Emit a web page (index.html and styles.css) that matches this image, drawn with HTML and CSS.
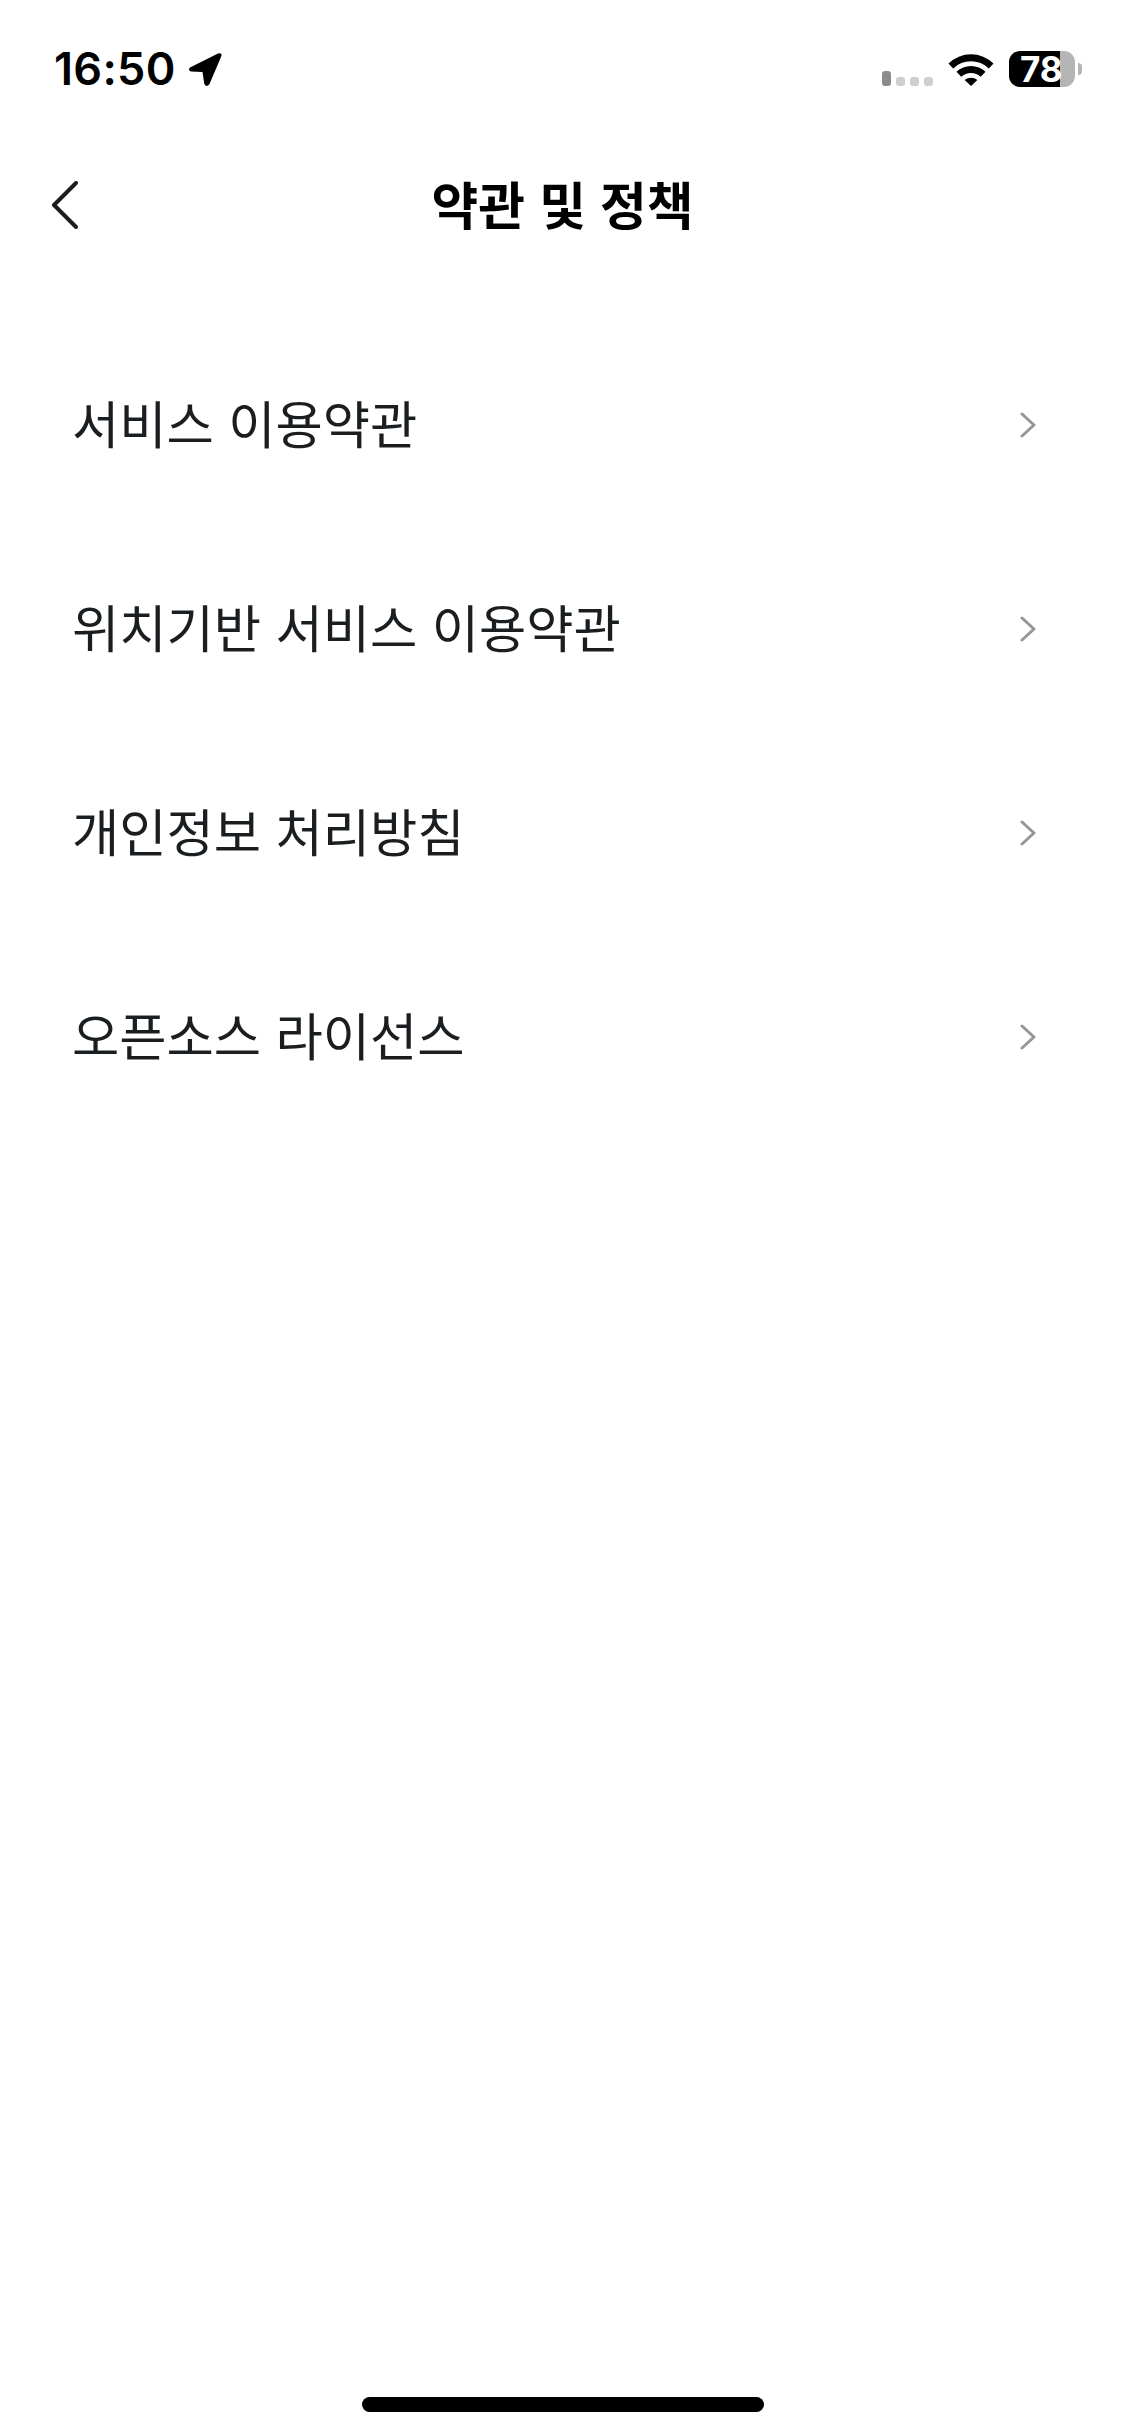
FILE: index.html
```html
<!DOCTYPE html>
<html lang="ko">
<head>
  <meta charset="UTF-8" />
  <meta name="viewport" content="width=device-width, initial-scale=1.0"/>
  <title>약관 및 정책</title>
  <link rel="stylesheet" href="styles.css">
</head>
<body>

  <div class="screen">
    <div class="status-bar">
      <div class="status-left">
        <span class="time">16:50</span>
        <svg class="location" width="36" height="37" viewBox="0 0 36 37">
          <path d="M3 16.5 L31 2.5 Q35.5 1 34.2 5.5 L22.5 33 Q19.5 37 17.3 33 L15.5 21 L4 20.5 Q0.5 19 3 16.5 Z" fill="#000"/>
        </svg>
      </div>
      <div class="status-right">
        <div class="signal">
          <span class="bar-on"></span>
          <span class="bar-off"></span>
          <span class="bar-off"></span>
          <span class="bar-off"></span>
        </div>
        <svg class="wifi" width="46" height="34" viewBox="0 0 46 34">
          <path d="M0.5 11.5 A32 32 0 0 1 45.5 11.5 L40.8 16.4 A25.5 25.5 0 0 0 5.2 16.4 Z" fill="#000"/>
          <path d="M8.5 19.8 A21 21 0 0 1 37.5 19.8 L32.8 24.7 A14.5 14.5 0 0 0 13.2 24.7 Z" fill="#000"/>
          <path d="M16.6 28 A10 10 0 0 1 29.4 28 L23 34 Z" fill="#000"/>
        </svg>
        <div class="battery"><span class="battery-level">78</span></div>
        <span class="battery-nub"></span>
      </div>
    </div>

    <div class="nav-bar">
      <a class="back-btn">
        <svg width="27" height="48" viewBox="0 0 27 48">
          <path d="M25 2 L3 24 L25 46" fill="none" stroke="#1a1e21" stroke-width="4" stroke-linecap="round" stroke-linejoin="round"/>
        </svg>
      </a>
      <h1 class="nav-title">약관 및 정책</h1>
    </div>

    <ul class="menu-list">
      <li class="menu-item">
        <span>서비스 이용약관</span>
        <svg class="chevron" width="16" height="26" viewBox="0 0 16 26"><path d="M2 2 L14 13 L2 24" fill="none" stroke="#92979a" stroke-width="3" stroke-linecap="round" stroke-linejoin="round"/></svg>
      </li>
      <li class="menu-item">
        <span>위치기반 서비스 이용약관</span>
        <svg class="chevron" width="16" height="26" viewBox="0 0 16 26"><path d="M2 2 L14 13 L2 24" fill="none" stroke="#92979a" stroke-width="3" stroke-linecap="round" stroke-linejoin="round"/></svg>
      </li>
      <li class="menu-item">
        <span>개인정보 처리방침</span>
        <svg class="chevron" width="16" height="26" viewBox="0 0 16 26"><path d="M2 2 L14 13 L2 24" fill="none" stroke="#92979a" stroke-width="3" stroke-linecap="round" stroke-linejoin="round"/></svg>
      </li>
      <li class="menu-item">
        <span>오픈소스 라이선스</span>
        <svg class="chevron" width="16" height="26" viewBox="0 0 16 26"><path d="M2 2 L14 13 L2 24" fill="none" stroke="#92979a" stroke-width="3" stroke-linecap="round" stroke-linejoin="round"/></svg>
      </li>
    </ul>

    <div class="home-indicator"></div>
  </div>

</body>
</html>
```

FILE: styles.css
```css
* {
  box-sizing: border-box;
}

body {
  margin: 0;
  padding: 0;
  background-color: white;
  font-family: "Noto Sans CJK KR", "Noto Sans", sans-serif;
}

.screen {
  width: 1125px;
  height: 2436px;
  display: flex;
  flex-direction: column;
  overflow: hidden;
}

.status-bar {
  height: 137px;
  padding: 51px 43px 0 54px;
  display: flex;
  justify-content: space-between;
  align-items: flex-start;
}

.status-left {
  display: flex;
  align-items: center;
  gap: 11px;
  height: 36px;
}

.time {
  font-family: Inter, "Liberation Sans", sans-serif;
  font-size: 45px;
  font-weight: 600;
  letter-spacing: 0.3px;
  line-height: 36px;
  color: #000;
}

.status-right {
  display: flex;
  align-items: center;
  height: 36px;
}

.signal {
  display: flex;
  align-items: flex-end;
  gap: 5px;
  height: 34px;
  padding-bottom: 0;
  margin-right: 15px;
}

.bar-on,
.bar-off {
  display: block;
  width: 9px;
  border-radius: 3px;
}

.bar-on {
  height: 15px;
  background: #8c8c8c;
}

.bar-off {
  height: 9px;
  background: #cfcfcf;
}

.wifi {
  margin-right: 15px;
}

.battery {
  width: 66px;
  height: 36px;
  border-radius: 11px;
  background: linear-gradient(to right, #000 51px, #b5b5b5 51px);
  padding-left: 11px;
}

.battery-level {
  display: block;
  font-family: Inter, "Liberation Sans", sans-serif;
  font-size: 35px;
  font-weight: 700;
  line-height: 36px;
  white-space: nowrap;
  color: #fff;
}

.battery-nub {
  width: 4px;
  height: 12px;
  margin-left: 3px;
  border-radius: 0 6px 6px 0;
  background: #b5b5b5;
}

.nav-bar {
  height: 136px;
  display: flex;
  justify-content: center;
  align-items: center;
  position: relative;
}

.back-btn {
  position: absolute;
  left: 51px;
  top: 44px;
  display: block;
  line-height: 0;
}

.nav-title {
  margin: 0 0 4px;
  font-size: 50.8px;
  font-weight: 700;
  line-height: 72px;
  color: #000;
}

.menu-list {
  list-style: none;
  margin: 50px 0 0;
  padding: 0 89px 0 72px;
}

.menu-item {
  height: 204px;
  display: flex;
  justify-content: space-between;
  align-items: center;
  font-size: 51.4px;
  font-weight: 400;
  line-height: 72px;
  color: #1a1e21;
}

.menu-item span {
  margin-bottom: 7px;
}

.home-indicator {
  width: 402px;
  height: 15px;
  margin: auto auto 24px;
  border-radius: 8px;
  background: #000;
}
```
